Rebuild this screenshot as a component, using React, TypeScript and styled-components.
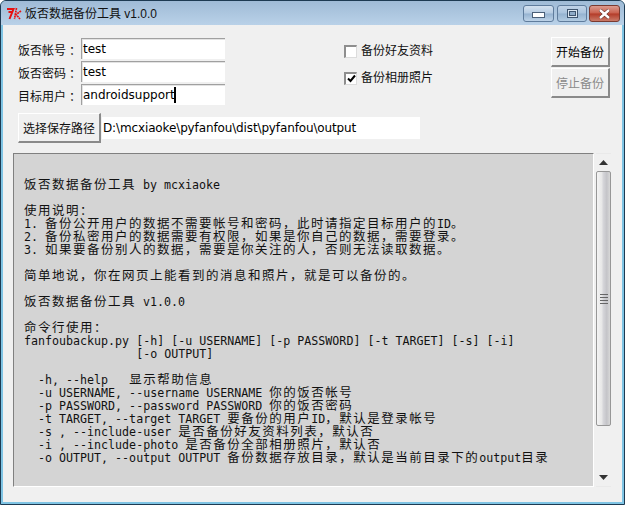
import React from 'react';
import styled, { createGlobalStyle } from 'styled-components';

const GlobalStyle = createGlobalStyle`
  html, body {
    margin: 0;
    padding: 0;
    background: #fff;
  }
`;

const Frame = styled.div`
  width: 625px;
  height: 505px;
  box-sizing: border-box;
  display: flex;
  flex-direction: column;
  border: 1px solid #1d3a52;
  border-radius: 6px 6px 0 0;
  background: #7fc4e4;
  padding: 0 2px 2px;
  overflow: hidden;
  font-family: "DejaVu Sans", "Noto Sans CJK SC", sans-serif;
`;

const TitleBar = styled.div`
  height: 24px;
  margin: 0 -2px;
  padding: 0 4px 0 5px;
  display: flex;
  align-items: flex-start;
  background: linear-gradient(#9fbbd6, #b9d1e8);
  flex: none;
`;

const AppIcon = styled.svg`
  width: 16px;
  height: 16px;
  margin-top: 4px;
  flex: none;
`;

const WindowTitle = styled.div`
  margin: 5px 0 0 3px;
  font-family: "Liberation Sans", "Noto Sans CJK SC", sans-serif;
  font-size: 12px;
  line-height: 16px;
  color: #111;
  flex: 1;
`;

const Caption = styled.div`
  display: flex;
  margin-top: 4px;
`;

const CaptionButton = styled.div<{ $width: number; $kind?: 'min' | 'max' | 'close' }>`
  width: ${(p) => p.$width}px;
  height: 17px;
  margin-left: ${(p) => (p.$kind === 'close' ? 2 : 3)}px;
  box-sizing: border-box;
  display: flex;
  align-items: ${(p) => (p.$kind === 'min' ? 'flex-end' : 'center')};
  padding-bottom: ${(p) => (p.$kind === 'min' ? 3 : 0)}px;
  justify-content: center;
  border: 1px solid ${(p) => (p.$kind === 'close' ? '#7a3a30' : '#5f7c9c')};
  border-radius: 3px;
  background: ${(p) =>
    p.$kind === 'close'
      ? 'linear-gradient(#dc9b8f, #c9604d 48%, #b33b28 52%, #c97a68)'
      : p.$kind === 'max'
      ? 'linear-gradient(#c0d3e7, #a9c3dd 48%, #94b2d0 52%, #b2cbe2)'
      : 'linear-gradient(#d3e1ef, #b5cbe2 48%, #95b2d0 52%, #bdd3e8)'};
`;

const Client = styled.div`
  flex: 1;
  min-height: 0;
  background: #f0f0f0;
  display: flex;
  flex-direction: column;
  padding: 12px 11px 15px 10px;
  box-sizing: border-box;
`;

const TopRow = styled.div`
  display: flex;
  align-items: flex-start;
`;

const Fields = styled.div`
  width: 331px;
  padding-left: 5px;
  box-sizing: border-box;
  display: flex;
  flex-direction: column;
  gap: 2px;
  margin-top: 1px;
`;

const FieldRow = styled.div`
  display: flex;
  align-items: center;
`;

const FieldLabel = styled.span`
  width: 63px;
  padding-top: 1px;
  font-size: 12px;
  color: #111;
  white-space: pre;
`;

const Colon = styled.span`
  margin-left: 3px;
`;

const TextField = styled.div<{ $width: number }>`
  width: ${(p) => p.$width}px;
  height: 21px;
  box-sizing: border-box;
  background: #fff;
  border-top: 1px solid #a0a0a0;
  border-left: 1px solid #a0a0a0;
  box-shadow: inset 1px 1px 0 #e3e3e3;
  padding-left: 1px;
  font-size: 12px;
  line-height: 20px;
  color: #000;
  white-space: pre;
`;

const Caret = styled.span`
  display: inline-block;
  width: 2px;
  height: 16px;
  background: #000;
  vertical-align: -4px;
  margin-left: -1px;
`;

const Options = styled.div`
  width: 207px;
  display: flex;
  flex-direction: column;
  gap: 13px;
  padding-top: 7px;
`;

const OptionRow = styled.label`
  display: flex;
  align-items: center;
  gap: 4px;
  font-size: 12px;
  line-height: 14px;
  color: #111;
`;

const CheckBox = styled.span`
  width: 13px;
  height: 13px;
  box-sizing: border-box;
  border-top: 2px solid #8e8e8e;
  border-left: 2px solid #8e8e8e;
  border-right: 1px solid #dcdcdc;
  border-bottom: 1px solid #dcdcdc;
  background: #fff;
  display: flex;
  align-items: center;
  justify-content: center;
`;

const ActionColumn = styled.div`
  display: flex;
  flex-direction: column;
  gap: 1px;
`;

const Button = styled.div<{ $disabled?: boolean }>`
  box-sizing: border-box;
  display: flex;
  align-items: center;
  justify-content: center;
  background: #f0f0f0;
  border-top: 1px solid #fff;
  border-left: 1px solid #fff;
  border-right: 2px solid #8a8a8a;
  border-bottom: 2px solid #8a8a8a;
  font-size: 12px;
  color: ${(p) => (p.$disabled ? '#8a8a8a' : '#000')};
`;

const ActionButton = styled(Button)`
  width: 59px;
  height: 30px;
`;

const PathRow = styled.div`
  display: flex;
  align-items: center;
  margin: 8px 0 10px 5px;
`;

const BrowseButton = styled(Button)`
  width: 83px;
  height: 30px;
  color: #111;
`;

const PathField = styled(TextField)`
  margin-left: 1px;
  border: none;
  box-shadow: none;
  height: 22px;
  line-height: 22px;
  padding-left: 1px;
  letter-spacing: -0.13px;
`;

const LogArea = styled.div`
  flex: 1;
  min-height: 0;
  display: flex;
`;

const LogText = styled.pre`
  flex: 1;
  margin: 0;
  box-sizing: border-box;
  background: #d4d4d4;
  border-top: 1px solid #808080;
  border-left: 1px solid #808080;
  border-right: 1px solid #fff;
  border-bottom: 1px solid #fff;
  padding: 12px 0 0 10px;
  font-family: "DejaVu Sans Mono", monospace;
  font-size: 11.65px;
  line-height: 13px;
  color: #111;
  overflow: hidden;
`;

const LogLine = styled.div`
  height: 13px;
  white-space: pre;
`;

const Han = styled.span`
  font-family: "Noto Sans CJK SC", sans-serif;
  font-size: 12.5px;
  line-height: 0;
  letter-spacing: 1.5px;
`;

const ScrollBar = styled.div`
  width: 15px;
  margin-left: 2px;
  flex: none;
  display: flex;
  flex-direction: column;
  background: #f0f0f0;
  border-top: 1px solid #e9e9e9;
  border-bottom: 1px solid #e9e9e9;
  box-sizing: border-box;
`;

const ScrollArrow = styled.div`
  height: 17px;
  flex: none;
  display: flex;
  align-items: center;
  justify-content: center;
`;

const ScrollThumb = styled.div`
  height: 255px;
  flex: none;
  box-sizing: border-box;
  border: 1px solid #979797;
  border-radius: 2px;
  background: linear-gradient(90deg, #f4f4f4, #e8e8e8 35%, #d4d4d8 50%, #c4c4c8 75%, #d8d8d8);
  display: flex;
  flex-direction: column;
  align-items: center;
  justify-content: center;
  gap: 2px;
`;

const ScrollTrack = styled.div`
  flex: 1;
`;

const Grip = styled.span`
  width: 8px;
  height: 1px;
  background: #666;
`;

const LOG = `
饭否数据备份工具 by mcxiaoke

使用说明：
1. 备份公开用户的数据不需要帐号和密码，此时请指定目标用户的ID。
2. 备份私密用户的数据需要有权限，如果是你自己的数据，需要登录。
3. 如果要备份别人的数据，需要是你关注的人，否则无法读取数据。

简单地说，你在网页上能看到的消息和照片，就是可以备份的。

饭否数据备份工具 v1.0.0

命令行使用：
fanfoubackup.py [-h] [-u USERNAME] [-p PASSWORD] [-t TARGET] [-s] [-i]
                [-o OUTPUT]

  -h, --help   显示帮助信息
  -u USERNAME, --username USERNAME 你的饭否帐号
  -p PASSWORD, --password PASSWORD 你的饭否密码
  -t TARGET, --target TARGET 要备份的用户ID，默认是登录帐号
  -s , --include-user 是否备份好友资料列表，默认否
  -i , --include-photo 是否备份全部相册照片，默认否
  -o OUTPUT, --output OUTPUT 备份数据存放目录，默认是当前目录下的output目录`;

// the Tk text widget draws CJK at exactly two columns, so those runs get their own span
const renderLine = (line: string) =>
  line.split(/([\u3000-\u9fff\uff00-\uffef]+)/).map((part, i) =>
    i % 2 === 1 ? <Han key={i}>{part}</Han> : part
  );

const App: React.FC = () => {
  return (
    <>
      <GlobalStyle />
      <Frame>
        <TitleBar>
          <AppIcon viewBox="0 0 16 16">
            <path d="M1 4h6.5l-4 10M2.5 7h3.5" fill="none" stroke="#e81010" strokeWidth="2" />
            <path d="M10.5 3L8.5 14M15 6l-5 3.5 4 4.5" fill="none" stroke="#e81010" strokeWidth="1.7" strokeDasharray="2 0.6" />
          </AppIcon>
          <WindowTitle>饭否数据备份工具 v1.0.0</WindowTitle>
          <Caption>
            <CaptionButton $width={31} $kind="min">
              <svg width="13" height="6" viewBox="0 0 13 6">
                <rect x="0.5" y="0.5" width="12" height="5" fill="#fff" stroke="#4a5f78" />
              </svg>
            </CaptionButton>
            <CaptionButton $width={30} $kind="max">
              <svg width="11" height="9" viewBox="0 0 11 9">
                <rect x="0.5" y="0.5" width="10" height="8" fill="#dbe6f1" stroke="#3f556e" />
                <rect x="2.5" y="2.5" width="6" height="4" fill="#8fabc7" stroke="#3f556e" />
              </svg>
            </CaptionButton>
            <CaptionButton $width={31} $kind="close">
              <svg width="13" height="10" viewBox="0 0 13 10">
                <path d="M2 1l9 8M11 1l-9 8" stroke="#5a2a22" strokeWidth="3.6" />
                <path d="M2 1l9 8M11 1l-9 8" stroke="#fff" strokeWidth="2.4" />
              </svg>
            </CaptionButton>
          </Caption>
        </TitleBar>
        <Client>
          <TopRow>
            <Fields>
              <FieldRow>
                <FieldLabel>饭否帐号<Colon>：</Colon></FieldLabel>
                <TextField $width={144}>test</TextField>
              </FieldRow>
              <FieldRow>
                <FieldLabel>饭否密码<Colon>：</Colon></FieldLabel>
                <TextField $width={144}>test</TextField>
              </FieldRow>
              <FieldRow>
                <FieldLabel>目标用户<Colon>：</Colon></FieldLabel>
                <TextField $width={144}>
                  androidsupport
                  <Caret />
                </TextField>
              </FieldRow>
            </Fields>
            <Options>
              <OptionRow>
                <CheckBox />
                备份好友资料
              </OptionRow>
              <OptionRow>
                <CheckBox>
                  <svg width="9" height="9" viewBox="0 0 9 9">
                    <path d="M1 4.5l2.5 2.5L8 1.5" fill="none" stroke="#000" strokeWidth="2" />
                  </svg>
                </CheckBox>
                备份相册照片
              </OptionRow>
            </Options>
            <ActionColumn>
              <ActionButton>开始备份</ActionButton>
              <ActionButton $disabled>停止备份</ActionButton>
            </ActionColumn>
          </TopRow>
          <PathRow>
            <BrowseButton>选择保存路径</BrowseButton>
            <PathField $width={318}>D:\mcxiaoke\pyfanfou\dist\pyfanfou\output</PathField>
          </PathRow>
          <LogArea>
            <LogText>
              {LOG.split('\n').map((line, i) => (
                <LogLine key={i}>{renderLine(line)}</LogLine>
              ))}
            </LogText>
            <ScrollBar>
              <ScrollArrow>
                <svg width="9" height="5" viewBox="0 0 9 5">
                  <path d="M4.5 0L9 5H0z" fill="#333" />
                </svg>
              </ScrollArrow>
              <ScrollThumb>
                <Grip />
                <Grip />
                <Grip />
                <Grip />
              </ScrollThumb>
              <ScrollTrack />
              <ScrollArrow>
                <svg width="9" height="5" viewBox="0 0 9 5">
                  <path d="M0 0h9L4.5 5z" fill="#333" />
                </svg>
              </ScrollArrow>
            </ScrollBar>
          </LogArea>
        </Client>
      </Frame>
    </>
  );
};

export default App;
